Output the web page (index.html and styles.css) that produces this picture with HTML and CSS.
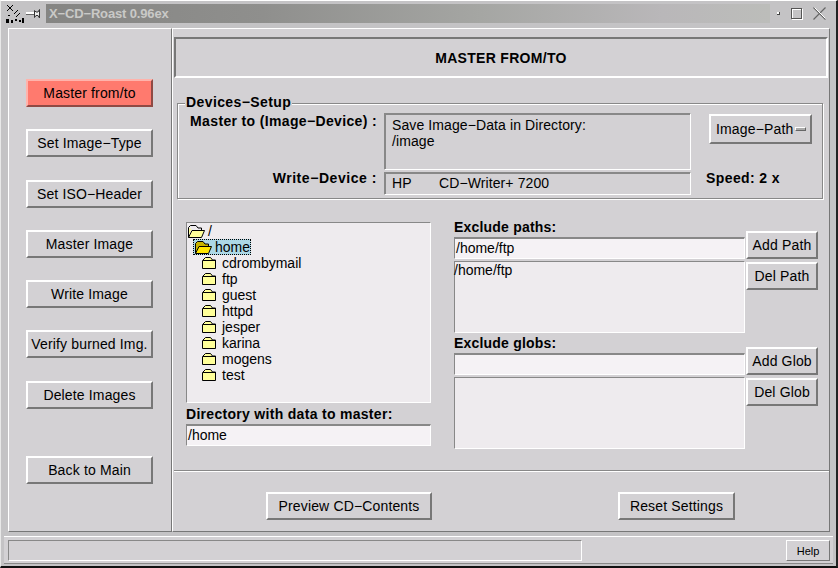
FILE: index.html
```html
<!DOCTYPE html>
<html lang="en">
<head>
    <meta charset="UTF-8">
    <title>X-CD-Roast 0.96ex</title>
    <link rel="stylesheet" href="styles.css">
</head>
<body>
    <svg class="defs" width="0" height="0">
        <symbol id="closed" viewBox="0 0 14 12">
            <path d="M.5 11.5V3.5L3.5.5H8.5L10.5 3H13.5V11.5Z" fill="#ffff99" stroke="#000"/>
            <path d="M1 3.5H13" stroke="#000"/>
        </symbol>
        <symbol id="open" viewBox="0 0 17 13">
            <path d="M.5 12.5V2.5L2.5.5H8L10 3H13.5V5.5" fill="none" stroke="#000"/>
            <path d="M.5 12.5L4 5.5H16.5L13.5 12.5Z" fill="#ffff99" stroke="#000"/>
            <path d="M1 3.5H3V5.5L1 9.5Z" fill="#ffff99"/>
        </symbol>
        <symbol id="openSel" viewBox="0 0 17 13">
            <path d="M.5 12.5V2.5L2.5.5H8L10 3H13.5V5.5" fill="#c8b400" stroke="#000"/>
            <path d="M.5 12.5L4 5.5H16.5L13.5 12.5Z" fill="#ffe600" stroke="#000"/>
        </symbol>
    </svg>

    <div class="window">
        <div class="titlebar">
            <svg class="appicon" width="20" height="20" viewBox="0 0 20 20">
                <path d="M2 1L8 7M8 1L2 7M9 10L13 6M15 9L11 13" stroke="#000" fill="none"/>
                <path d="M1 15H4V19H1ZM6 16H8V19H6ZM10 15H12V17H10ZM14 16H16V18H14ZM17 14H19V19H17ZM3 11H5V12H3Z" fill="#000"/>
            </svg>
            <svg class="pin" width="15" height="10" viewBox="0 0 15 10">
                <path d="M0 4H8" stroke="#fff" stroke-width="2"/>
                <path d="M0 5.5H8" stroke="#666"/>
                <path d="M8.5 1.5L10 3H12L13.5 .5V9L12 6.5H10L8.5 8.5Z" fill="#eee" stroke="#333"/>
            </svg>
            <div class="title">X&minus;CD&minus;Roast 0.96ex</div>
            <div class="wm-btns">
                <span class="wm-min"></span>
                <span class="wm-max"></span>
                <svg width="13" height="13" viewBox="0 0 13 13"><path d="M.5.5L12.5 12.5M12.5.5L.5 12.5" stroke="#666" stroke-width="1.2"/><path d="M1.5.5L12.5 11.5" stroke="#fff"/></svg>
            </div>
        </div>

        <div class="client">
            <div class="sidebar">
                <button class="btn side active">Master from/to</button>
                <button class="btn side">Set Image&minus;Type</button>
                <button class="btn side">Set ISO&minus;Header</button>
                <button class="btn side">Master Image</button>
                <button class="btn side">Write Image</button>
                <button class="btn side">Verify burned Img.</button>
                <button class="btn side">Delete Images</button>
                <button class="btn side back">Back to Main</button>
            </div>

            <div class="content">
                <div class="heading">MASTER FROM/TO</div>

                <div class="group">
                    <div class="legend">Devices&minus;Setup</div>
                    <div class="device-grid">
                        <div class="dev-label first">Master to (Image&minus;Device) :</div>
                        <div class="info tall">Save Image&minus;Data in Directory:<br>/image</div>
                        <div class="path-cell">
                            <button class="btn path">Image&minus;Path<span class="opt"></span></button>
                        </div>
                        <div class="dev-label write">Write&minus;Device :</div>
                        <div class="info short"><span class="vendor">HP</span>CD&minus;Writer+ 7200</div>
                        <div class="speed">Speed: 2 x</div>
                    </div>
                </div>

                <div class="middle">
                    <div class="left-col">
                        <div class="tree">
                            <div class="row d0"><svg class="ico-open"><use href="#open"/></svg>/</div>
                            <div class="row d1"><span class="sel"><svg class="ico-open"><use href="#openSel"/></svg>home</span></div>
                            <div class="row d2"><svg class="ico"><use href="#closed"/></svg>cdrombymail</div>
                            <div class="row d2"><svg class="ico"><use href="#closed"/></svg>ftp</div>
                            <div class="row d2"><svg class="ico"><use href="#closed"/></svg>guest</div>
                            <div class="row d2"><svg class="ico"><use href="#closed"/></svg>httpd</div>
                            <div class="row d2"><svg class="ico"><use href="#closed"/></svg>jesper</div>
                            <div class="row d2"><svg class="ico"><use href="#closed"/></svg>karina</div>
                            <div class="row d2"><svg class="ico"><use href="#closed"/></svg>mogens</div>
                            <div class="row d2"><svg class="ico"><use href="#closed"/></svg>test</div>
                        </div>
                        <div class="label dir-label">Directory with data to master:</div>
                        <div class="entry">/home</div>
                    </div>

                    <div class="right-col">
                        <div class="section">
                            <div class="fields">
                                <div class="label">Exclude paths:</div>
                                <div class="entry">/home/ftp</div>
                                <div class="list">/home/ftp</div>
                            </div>
                            <div class="actions">
                                <button class="btn small">Add Path</button>
                                <button class="btn small">Del Path</button>
                            </div>
                        </div>
                        <div class="section">
                            <div class="fields">
                                <div class="label">Exclude globs:</div>
                                <div class="entry"></div>
                                <div class="list"></div>
                            </div>
                            <div class="actions">
                                <button class="btn small">Add Glob</button>
                                <button class="btn small">Del Glob</button>
                            </div>
                        </div>
                    </div>
                </div>

                <div class="separator"></div>

                <div class="bottom">
                    <button class="btn preview">Preview CD&minus;Contents</button>
                    <button class="btn reset">Reset Settings</button>
                </div>
            </div>
        </div>

        <div class="statusbar">
            <div class="progress"></div>
            <button class="help">Help</button>
        </div>
    </div>
</body>
</html>
```

FILE: styles.css
```css
* { margin: 0; padding: 0; box-sizing: border-box; }
html, body { width: 838px; height: 568px; overflow: hidden; }
body { background: #d3d1d4; color: #000; font-family: "Liberation Sans", Arial, sans-serif; font-size: 14px; }
.defs { position: absolute; }

.window { width: 838px; height: 568px; display: flex; flex-direction: column; background: #c4c3c5; border-top: 1px solid #fff; border-left: 1px solid #e8e8e8; border-right: 2px solid #222; border-bottom: 2px solid #111; }

/* window manager title */
.titlebar { height: 27px; padding: 3px 5px 0 4px; display: flex; align-items: flex-start; }
.appicon { flex: none; margin-right: 1px; }
.pin { flex: none; margin-top: 5px; margin-right: 5px; }
.title { width: 724px; height: 19px; padding-left: 3px; line-height: 19px; font-weight: bold; font-size: 13px; letter-spacing: -.15px; color: #c9c9c7; background: linear-gradient(to right, #858583, #8f8f8d 30%, #a5a6a3 60%, #b9b7b9 85%, #bcbdba); }
.wm-btns { display: flex; align-items: center; height: 19px; margin-left: 7px; }
.wm-min { width: 3px; height: 3px; background: #fff; border-right: 1px solid #444; border-bottom: 1px solid #444; margin-right: 11px; }
.wm-max { width: 11px; height: 11px; border: 1px solid #555; box-shadow: inset 1px 1px 0 #fff, 1px 1px 0 #fff; margin-right: 11px; }

.client { height: 504px; margin-left: 7px; width: 822px; display: flex; background: #d3d1d4; }

/* buttons */
.btn { display: block; font: 14px "Liberation Sans", Arial, sans-serif; letter-spacing: .15px; color: #000; background: #d3d1d4; border: 2px solid; border-color: #fff #777 #777 #fff; }
.side { width: 127px; height: 28px; flex: none; }
.active { background: #ff7a6e; border-color: #ffb3ab #8f4a44 #8f4a44 #ffb3ab; }
.back { margin-top: 25.1px; }

.sidebar { width: 164px; padding: 50px 0 0 17px; display: flex; flex-direction: column; gap: 22.3px; border: 1px solid; border-color: #fff #777 #777 #fff; }

.content { width: 658px; border: 1px solid; border-color: #fff #777 #777 #fff; }

.heading { height: 41px; margin: 8px 1px 0; line-height: 39px; text-align: center; font-weight: bold; letter-spacing: .3px; border: 2px solid; border-color: #777 #fff #fff #777; }

.group { width: 646px; height: 96px; margin: 25px 0 0 4px; border: 1px solid #888; box-shadow: inset 1px 1px 0 #fff, 1px 1px 0 #fff; }
.legend { width: fit-content; height: 16px; margin: -9px 0 0 7px; padding: 0 1px; line-height: 15px; font-weight: bold; background: #d3d1d4; letter-spacing: .4px; }

.device-grid { display: grid; grid-template-columns: 199px 307px 1fr; grid-template-rows: 57px 23px; column-gap: 7px; row-gap: 2px; margin-top: 2px; }
.dev-label { text-align: right; font-weight: bold; line-height: 13px; letter-spacing: .35px; }
.first { line-height: 16px; }
.write { letter-spacing: .55px; }
.info { padding-left: 7px; letter-spacing: .1px; border: 1px solid; border-color: #888 #fff #fff #888; box-shadow: 1px 1px 0 #888 inset; }
.tall { padding-top: 3px; line-height: 16px; }
.short { line-height: 21px; }
.vendor { display: inline-block; width: 47px; }
.path-cell { padding: 1px 0 0 11px; }
.path { width: 103px; height: 30px; padding: 0 0 0 5px; display: flex; align-items: center; white-space: nowrap; }
.opt { width: 11px; height: 4px; margin-left: 2px; background: #aaa; border: 1px solid; border-color: #fff #666 #666 #fff; }
.speed { padding: 0 0 0 8px; font-weight: bold; letter-spacing: .4px; line-height: 13px; }

.middle { display: flex; margin: 20px 0 0 13px; }
.left-col { width: 245px; padding-top: 3px; margin-right: 23px; }
.right-col { display: flex; flex-direction: column; gap: 2px; }

.tree { height: 181px; background: #eeebee; border: 1px solid; border-color: #888 #fff #fff #888; }
.row { height: 16px; display: flex; align-items: center; line-height: 16px; white-space: nowrap; }
.d0 { padding-left: 1px; }
.d1 { padding-left: 6px; }
.d2 { padding-left: 15px; }
.ico { width: 14px; height: 12px; margin-right: 6px; }
.ico-open { width: 17px; height: 13px; margin-right: 3px; }
.sel { display: flex; align-items: center; height: 16px; padding: 0 1px 0 2px; background: #add8e6; outline: 1px dotted #000; outline-offset: -1px; }

.label { height: 18px; font-weight: bold; line-height: 16px; letter-spacing: .2px; }
.dir-label { height: 21px; line-height: 22px; letter-spacing: .3px; }
.entry { height: 22px; padding-left: 1px; line-height: 19px; background: #f5f2f5; border: 2px solid; border-color: #888 #fff #fff #888; border-width: 2px 1px 1px 1px; }
.list { height: 72px; margin-top: 2px; line-height: 17px; text-indent: -1px; background: #eeebee; border: 1px solid; border-color: #888 #fff #fff #888; }

.section { display: flex; height: 114px; }
.fields { width: 291px; }
.actions { padding: 12px 0 0 1px; display: flex; flex-direction: column; gap: 3px; }
.small { width: 72px; height: 28px; padding: 0; }

.separator { height: 2px; margin: 21px 0 0 1px; border-top: 1px solid #888; border-bottom: 1px solid #fff; }
.bottom { display: flex; padding: 20px 0 0 93px; gap: 186px; }
.preview { width: 166px; height: 28px; }
.reset { width: 117px; height: 28px; }

/* status line */
.statusbar { height: 28px; margin: 4px 0 0 3px; width: 829px; padding: 3px 3px 0 4px; display: flex; justify-content: space-between; background: #d3d1d4; border-top: 1px solid #fff; border-bottom: 1px solid #888; }
.progress { width: 574px; height: 21px; border: 1px solid; border-color: #888 #fff #fff #888; }
.help { width: 44px; height: 21px; font: 11px "Liberation Sans", Arial, sans-serif; background: #d3d1d4; border: 1px solid; border-color: #fff #777 #777 #fff; }
```
